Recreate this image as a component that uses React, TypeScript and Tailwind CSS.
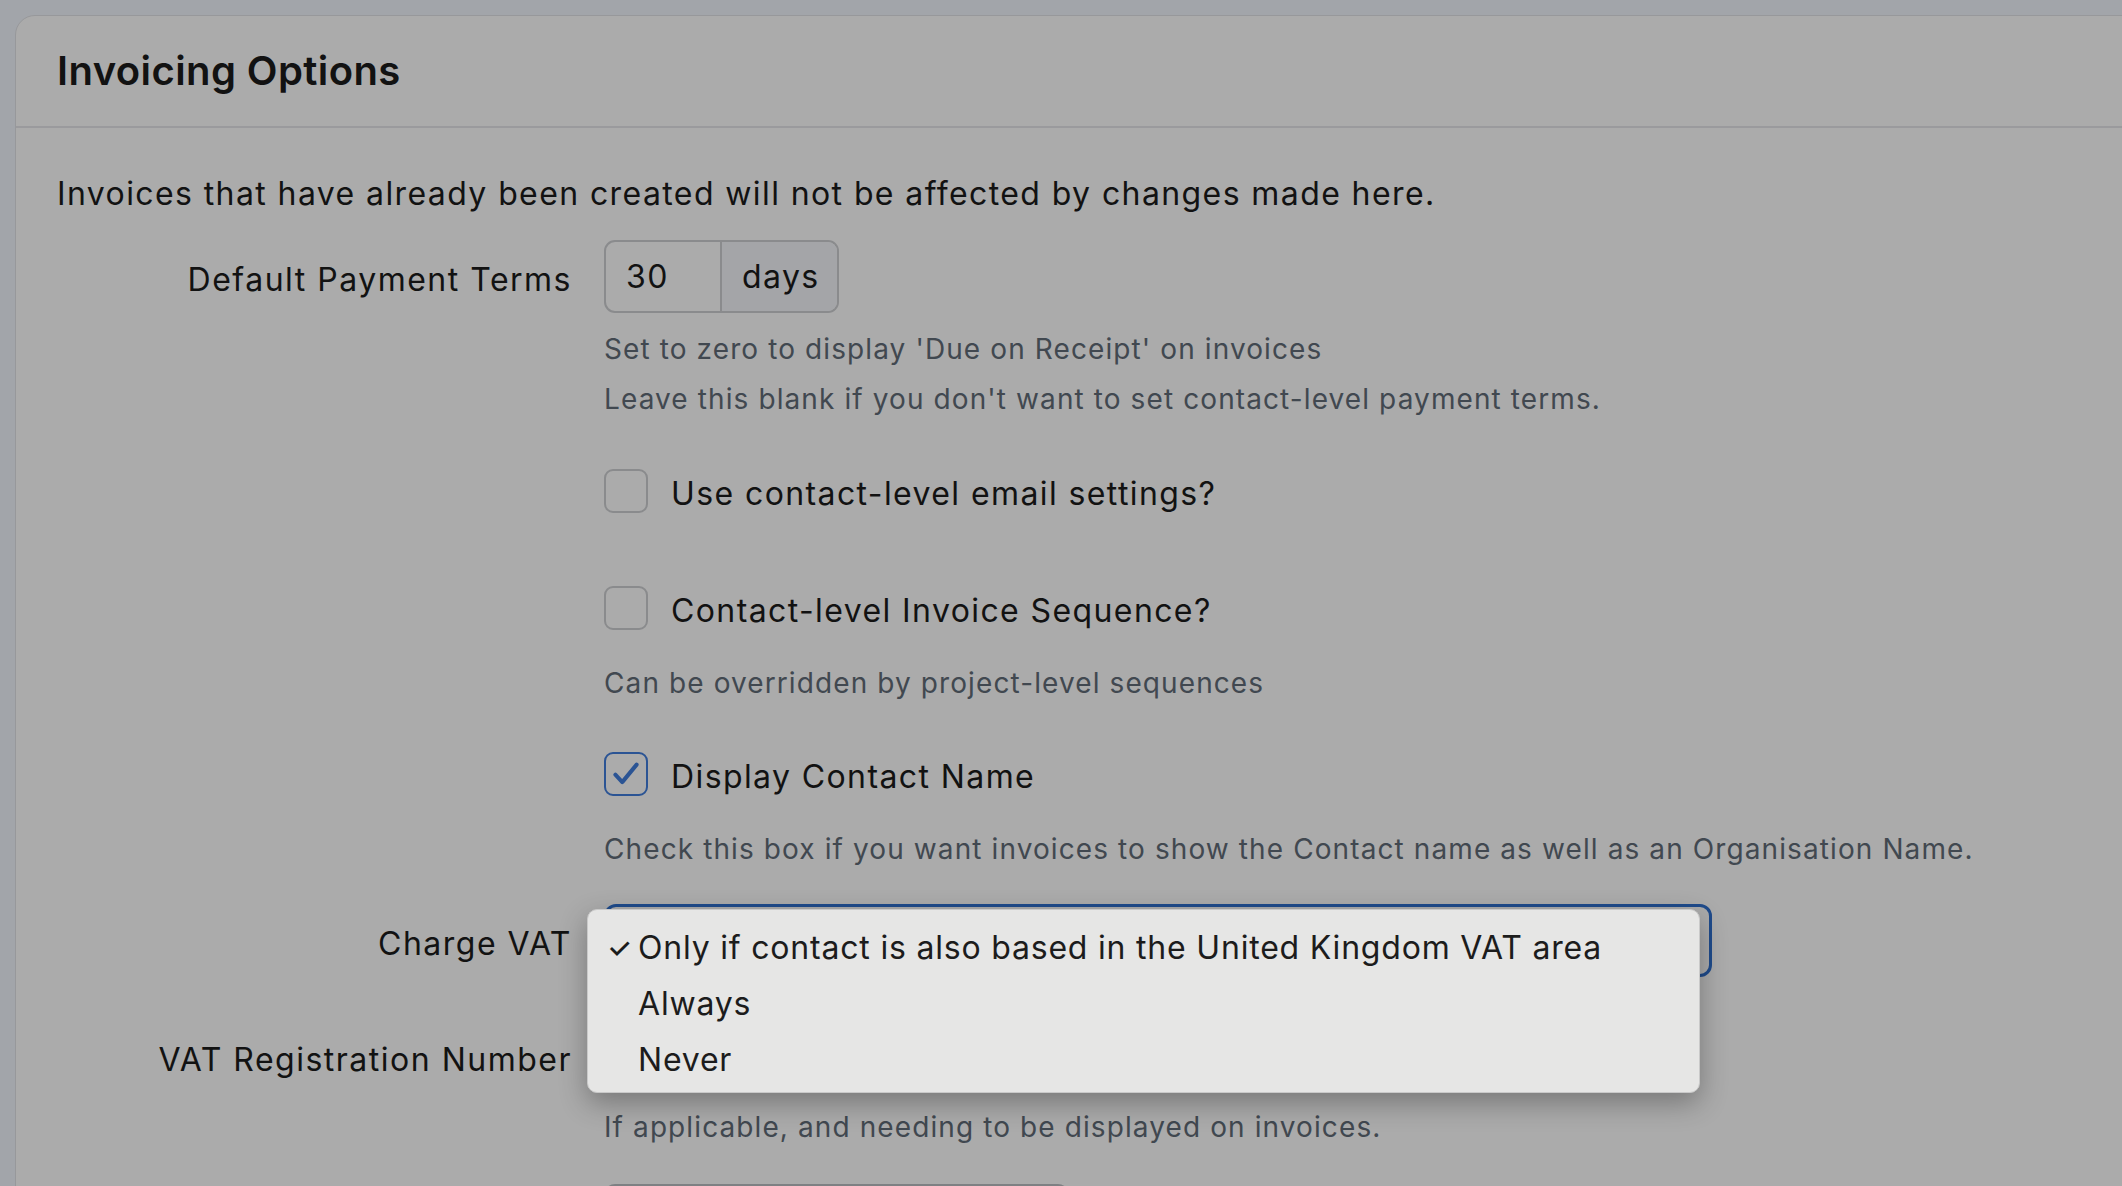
import React from "react";

const font = { fontFamily: 'Inter, "Liberation Sans", Arial, sans-serif' };

const Checkbox = ({ checked }: { checked?: boolean }) => (
  <span
    className={
      "flex h-[44px] w-[44px] shrink-0 items-center justify-center rounded-[9px] border-2 " +
      (checked ? "border-[#2b5494]" : "border-[#8a8b8d]")
    }
  >
    {checked && (
      <svg width="30" height="30" viewBox="0 0 24 24" fill="none">
        <path d="M3.5 12.5l5.5 6L20.5 4.5" stroke="#2b5494" strokeWidth="3.2" strokeLinecap="round" strokeLinejoin="round" />
      </svg>
    )}
  </span>
);

const Row = ({ label, children, className = "" }: { label?: string; children: React.ReactNode; className?: string }) => (
  <div className={"flex items-center gap-[32px] " + className}>
    <div className="w-[515px] shrink-0 translate-y-[3px] text-right text-[32px] leading-[44px] tracking-[1.5px] text-[#121212]">{label}</div>
    <div className="flex-1">{children}</div>
  </div>
);

const CheckRow = ({ checked, text, className = "" }: { checked?: boolean; text: string; className?: string }) => (
  <Row className={className}>
    <label className="flex items-center gap-[23px] text-[32px] leading-[44px] tracking-[1.4px] text-[#121212]">
      <Checkbox checked={checked} />
      <span className="translate-y-[3px]">{text}</span>
    </label>
  </Row>
);

const Help = ({ children, className = "" }: { children: React.ReactNode; className?: string }) => (
  <div className={"pl-[547px] text-[28px] leading-[50px] tracking-[1.1px] text-[#414850] " + className}>{children}</div>
);

const App = () => {
  return (
    <div className="h-[1186px] overflow-hidden bg-[#a2a5aa] pl-[15px] pt-[15px]" style={font}>
      <div className="min-h-[1300px] w-[2200px] rounded-tl-[20px] border border-[#97989b] bg-[#ababab]">
        <div className="flex h-[112px] items-center border-b-2 border-[#9a9a9d] pl-[41px]">
          <h2 className="text-[40px] font-semibold tracking-[0.4px] text-[#121212]">Invoicing Options</h2>
        </div>

        <div className="pl-[41px] pt-[42px]">
          <p className="text-[32px] leading-[48px] tracking-[1.4px] text-[#121212]">
            Invoices that have already been created will not be affected by changes made here.
          </p>

          <Row label="Default Payment Terms" className="mt-[22px]">
            <div className="flex h-[73px] w-[235px] overflow-hidden rounded-[11px] border-2 border-[#8a8b8d] text-[32px] tracking-[1.4px] text-[#121212]">
              <div className="flex w-[114px] items-center pl-[20px]">30</div>
              <div className="flex flex-1 items-center border-l-2 border-[#8a8b8d] bg-[#a4a5a8] pl-[20px]">days</div>
            </div>
          </Row>
          <Help className="mt-[11px]">Set to zero to display 'Due on Receipt' on invoices</Help>
          <Help>Leave this blank if you don't want to set contact-level payment terms.</Help>

          <CheckRow text="Use contact-level email settings?" className="mt-[45px]" />

          <CheckRow text="Contact-level Invoice Sequence?" className="mt-[73px]" />
          <Help className="mt-[28px]">Can be overridden by project-level sequences</Help>

          <CheckRow checked text="Display Contact Name" className="mt-[44px]" />
          <Help className="mt-[28px]">
            Check this box if you want invoices to show the Contact name as well as an Organisation Name.
          </Help>

          <Row label="Charge VAT" className="mt-[30px]">
            <div className="relative h-[73px] w-[1108px] rounded-[12px] border-[3px] border-[#1f4b8b]">
              <div className="absolute left-[-20px] top-[2px] z-10 w-[1113px] rounded-[10px] border border-[#c9c9c9] bg-[#e6e6e5] pb-[4px] pt-[10px] text-[32px] tracking-[0.8px] text-[#1c1c1c] shadow-[0_10px_28px_rgba(0,0,0,0.3)]">
                <div className="relative flex h-[56px] items-center pl-[50px]">
                  <span className="absolute left-[19px] text-[28px] font-medium">✓</span>
                  Only if contact is also based in the United Kingdom VAT area
                </div>
                <div className="flex h-[56px] items-center pl-[50px]">Always</div>
                <div className="flex h-[56px] items-center pl-[50px]">Never</div>
              </div>
            </div>
          </Row>

          <Row label="VAT Registration Number" className="mt-[43px]">
            <div className="h-[73px] w-[465px] rounded-[11px] border-2 border-[#8a8b8d]" />
          </Row>
          <Help className="mt-[9px]">If applicable, and needing to be displayed on invoices.</Help>

          <Row className="mt-[32px]">
            <div className="h-[73px] w-[465px] rounded-[11px] border-2 border-[#7e8083]" />
          </Row>
        </div>
      </div>
    </div>
  );
};

export default App;
